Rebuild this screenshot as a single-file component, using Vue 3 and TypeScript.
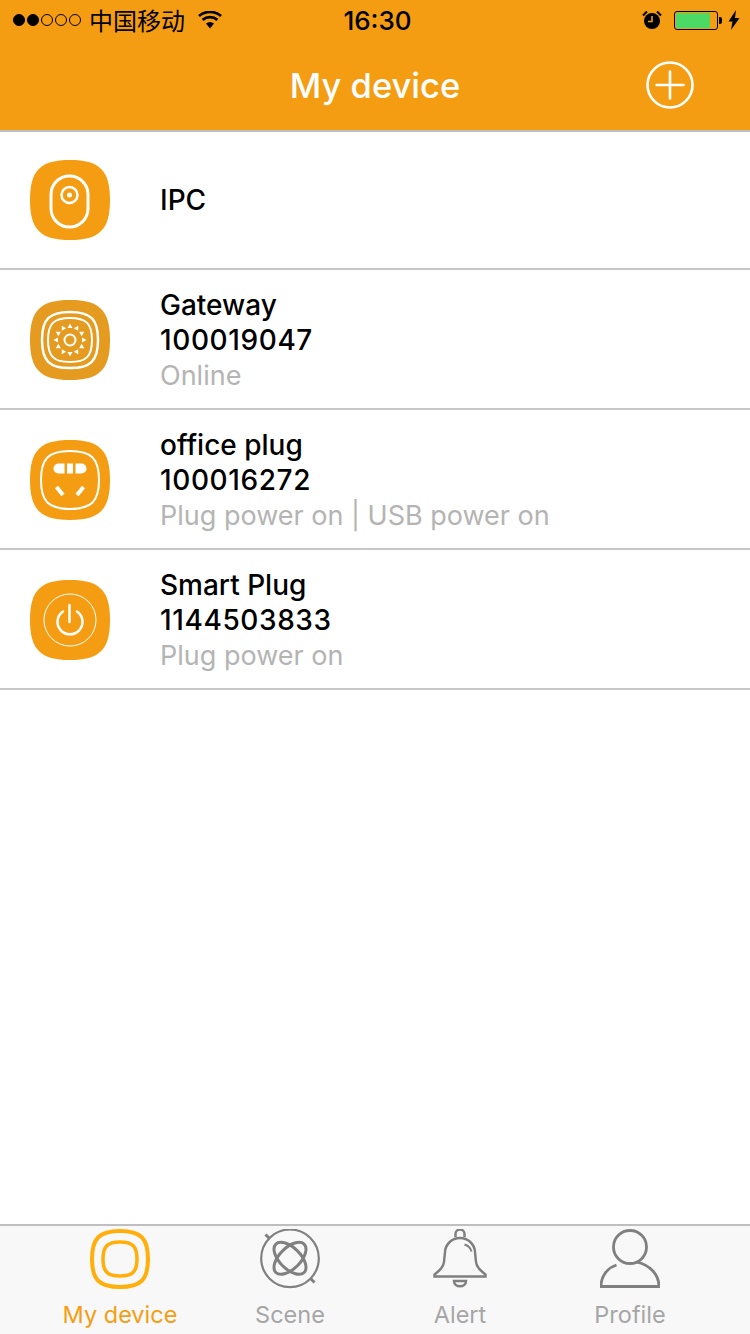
<script setup lang="ts">
interface Device {
  id: string
  icon: 'ipc' | 'gateway' | 'plug' | 'power'
  name: string
  serial?: string
  status?: string
}

const devices: Device[] = [
  { id: 'ipc', icon: 'ipc', name: 'IPC' },
  { id: 'gateway', icon: 'gateway', name: 'Gateway', serial: '100019047', status: 'Online' },
  { id: 'office', icon: 'plug', name: 'office plug', serial: '100016272', status: 'Plug power on | USB power on' },
  { id: 'smart', icon: 'power', name: 'Smart Plug', serial: '1144503833', status: 'Plug power on' },
]

const tabs = [
  { id: 'device', label: 'My device' },
  { id: 'scene', label: 'Scene' },
  { id: 'alert', label: 'Alert' },
  { id: 'profile', label: 'Profile' },
]

const signal = [true, true, false, false, false]
const sunRays = Array.from({ length: 12 }, (_, i) => i * 30)

// squircle outline centred on c, half width r
function squircle(c: number, r: number): string {
  const a = r * 0.74
  return `M${c} ${c - r}C${c + a} ${c - r} ${c + r} ${c - a} ${c + r} ${c}` +
    `C${c + r} ${c + a} ${c + a} ${c + r} ${c} ${c + r}` +
    `C${c - a} ${c + r} ${c - r} ${c + a} ${c - r} ${c}` +
    `C${c - r} ${c - a} ${c - a} ${c - r} ${c} ${c - r}Z`
}
</script>

<template>
  <div class="page">
    <header class="top">
      <div class="status-bar">
        <div class="status-left">
          <span class="dots">
            <i
              v-for="(on, i) in signal"
              :key="i"
              class="dot"
              :class="{ on }"
            />
          </span>
          <span class="carrier">中国移动</span>
          <svg
            class="wifi"
            width="24"
            height="18"
            viewBox="0 0 24 18"
          >
            <path
              d="M12 17.500 8 12.600a6.200 6.200 0 0 1 8 0Z"
              fill="#000"
            />
            <path
              d="M4.600 8.900a11.400 11.400 0 0 1 14.800 0M1 5a17 17 0 0 1 22 0"
              fill="none"
              stroke="#000"
              stroke-width="2.800"
            />
          </svg>
        </div>
        <span class="time">16:30</span>
        <div class="status-right">
          <svg
            width="20"
            height="20"
            viewBox="0 0 20 20"
          >
            <circle
              cx="10"
              cy="11"
              r="8"
              fill="#000"
            />
            <path
              d="M10 6v5.500H6"
              fill="none"
              stroke="#f59d12"
              stroke-width="1.600"
            />
            <path
              d="M1 5.500 5 1.500M19 5.500l-4-4"
              stroke="#000"
              stroke-width="2"
            />
          </svg>
          <span class="battery"><i class="battery-fill" /></span>
          <i class="battery-tip" />
          <svg
            class="bolt"
            width="12"
            height="20"
            viewBox="0 0 12 20"
          >
            <path
              d="M8 0 .5 11.500h4L3 20l8.500-12h-4.500z"
              fill="#000"
            />
          </svg>
        </div>
      </div>
      <div class="nav-bar">
        <span />
        <h1 class="title">My device</h1>
        <svg
          class="add"
          width="48"
          height="48"
          viewBox="0 0 48 48"
        >
          <circle
            cx="24"
            cy="24"
            r="22.500"
            fill="none"
            stroke="#fff"
            stroke-width="2.600"
          />
          <path
            d="M10.500 24h27M24 10.500v27"
            stroke="#fff"
            stroke-width="2.600"
            stroke-linecap="round"
          />
        </svg>
      </div>
    </header>

    <main class="list">
      <div
        v-for="device in devices"
        :key="device.id"
        class="row"
      >
        <svg
          class="row-icon"
          width="80"
          height="80"
          viewBox="0 0 80 80"
        >
          <path
            :d="squircle(40, 40)"
            :fill="device.icon === 'gateway' ? '#e59a20' : '#f59d12'"
          />
          <g
            v-if="device.icon === 'ipc'"
            fill="none"
            stroke="#fff"
          >
            <rect
              x="21"
              y="16"
              width="37"
              height="51"
              rx="18.500"
              stroke-width="3"
            />
            <circle
              cx="39.500"
              cy="35"
              r="8"
              stroke-width="2.500"
            />
            <circle
              cx="39.500"
              cy="35"
              r="2.500"
              fill="#fff"
              stroke="none"
            />
          </g>
          <g
            v-else-if="device.icon === 'gateway'"
            fill="none"
            stroke="#fff"
          >
            <path
              :d="squircle(40, 28)"
              stroke-width="2.500"
            />
            <path
              :d="squircle(40, 22)"
              stroke-width="2"
            />
            <circle
              cx="40"
              cy="40"
              r="5.500"
              stroke-width="2"
            />
            <path
              v-for="deg in sunRays"
              :key="deg"
              d="M40 23.500l2.500 4.500h-5z"
              fill="#fff"
              stroke="none"
              :transform="`rotate(${deg} 40 40)`"
            />
          </g>
          <g
            v-else-if="device.icon === 'plug'"
            fill="none"
            stroke="#fff"
          >
            <path
              :d="squircle(40, 29)"
              stroke-width="2"
            />
            <g
              fill="#fff"
              stroke="none"
            >
              <path d="M34.500 23.500H28.500a5 5 0 0 0 0 10h6z" />
              <rect
                x="37"
                y="23.500"
                width="6"
                height="10"
              />
              <path d="M45.500 23.500h6a5 5 0 0 1 0 10h-6z" />
            </g>
            <path
              d="M26.500 47 33 55M53.500 47 47 55"
              stroke-width="4"
            />
          </g>
          <g
            v-else
            fill="none"
            stroke="#fff"
          >
            <circle
              cx="40"
              cy="40"
              r="26"
              stroke-width="1"
            />
            <path
              d="M33 31.500a12.500 12.500 0 1 0 14 0"
              stroke-width="2.500"
              stroke-linecap="round"
            />
            <path
              d="M39.500 25v17"
              stroke-width="2.500"
              stroke-linecap="round"
            />
          </g>
        </svg>
        <div class="info">
          <div class="line name">{{ device.name }}</div>
          <div
            v-if="device.serial"
            class="line name serial"
          >{{ device.serial }}</div>
          <div
            v-if="device.status"
            class="line status"
          >{{ device.status }}</div>
        </div>
      </div>
    </main>

    <nav class="tabbar">
      <div
        v-for="tab in tabs"
        :key="tab.id"
        class="tab"
        :class="{ active: tab.id === 'device' }"
      >
        <svg
          width="60"
          height="60"
          viewBox="0 0 60 60"
          fill="none"
          stroke="#808080"
        >
          <g
            v-if="tab.id === 'device'"
            stroke="#ffae0a"
          >
            <path
              :d="squircle(30, 28)"
              stroke-width="4"
            />
            <path
              :d="squircle(30, 17)"
              stroke-width="3.500"
            />
          </g>
          <g v-else-if="tab.id === 'scene'">
            <circle
              cx="30"
              cy="29.300"
              r="28.800"
              stroke-width="2.200"
            />
            <path
              d="M5.500 5.500l4 4M50.500 49.500l4 4"
              stroke-width="3"
            />
            <ellipse
              cx="30"
              cy="29.300"
              rx="20"
              ry="10.500"
              stroke-width="3"
              transform="rotate(45 30 29.300)"
            />
            <ellipse
              cx="30"
              cy="29.300"
              rx="20"
              ry="10.500"
              stroke-width="3"
              transform="rotate(-45 30 29.300)"
            />
          </g>
          <g
            v-else-if="tab.id === 'alert'"
            stroke-width="2.500"
          >
            <path d="M25.500 8V5a4.500 4.500 0 0 1 9 0v3" />
            <path d="M4.500 47.500V45.500c4.500-3.500 9-7 9.500-12.500l1-10c.500-8 7-14 15-14s14.500 6 15 14l1 10c.500 5.500 5 9 9.500 12.500v2Z" />
            <path d="M24 52h12c0 7-12 7-12 0Z" />
            <path
              d="M34.500 15.500c3.500 1 6 3.500 7 7"
              stroke-width="2"
            />
          </g>
          <g
            v-else
            stroke-width="2.800"
          >
            <circle
              cx="30"
              cy="18"
              r="16.500"
            />
            <path d="M16.500 36C7 39 1 47.500 1 57.500h58C59 45 49 35.500 36.500 33" />
          </g>
        </svg>
        <span class="tab-label">{{ tab.label }}</span>
      </div>
    </nav>
  </div>
</template>

<style scoped>
.page {
  width: 750px;
  height: 1334px;
  display: flex;
  flex-direction: column;
  background: #fff;
  font-family: Inter, "Liberation Sans", sans-serif;
  overflow: hidden;
}

/* top orange area */
.top {
  height: 132px;
  box-sizing: border-box;
  background: #f59d12;
  border-bottom: 2px solid #bdc2c6;
}

.status-bar {
  height: 40px;
  display: grid;
  grid-template-columns: 1fr auto 1fr;
  align-items: center;
  padding: 0 10px 0 13px;
  color: #000;
}

.status-left,
.status-right {
  display: flex;
  align-items: center;
}

.status-right {
  justify-content: flex-end;
}

.dots {
  display: flex;
  gap: 2px;
}

.dot {
  width: 12px;
  height: 12px;
  box-sizing: border-box;
  border: 1px solid #000;
  border-radius: 50%;
}

.dot.on {
  background: #000;
}

.carrier {
  margin-left: 8px;
  font-family: "Noto Sans CJK SC", sans-serif;
  font-size: 24px;
  line-height: 40px;
}

.wifi {
  margin-left: 13px;
}

.time {
  margin-left: 2px;
  font-size: 26px;
  font-weight: 500;
}

.battery {
  width: 44px;
  height: 19px;
  box-sizing: border-box;
  margin-left: 12px;
  padding: 1px;
  border: 1px solid #000;
  border-radius: 3px;
}

.battery-fill {
  display: block;
  width: 34px;
  height: 100%;
  background: #4cd964;
}

.battery-tip {
  width: 3px;
  height: 7px;
  margin-left: 1px;
  background: #000;
  border-radius: 0 2px 2px 0;
}

.bolt {
  margin-left: 6px;
}

.nav-bar {
  height: 90px;
  display: grid;
  grid-template-columns: 1fr auto 1fr;
  align-items: center;
  padding-right: 56px;
}

.title {
  margin: 0 0 0 56px;
  color: #fff;
  font-size: 34.500px;
  font-weight: 500;
}

.add {
  justify-self: end;
}

/* device list */
.list {
  flex: 1;
}

.row {
  height: 140px;
  box-sizing: border-box;
  display: flex;
  align-items: center;
  padding: 2px 0 0 30px;
  border-bottom: 2px solid #c8c8c8;
}

.row:first-child {
  height: 138px;
  padding-top: 0;
}

.row-icon {
  flex: none;
}

.info {
  margin-left: 50px;
}

.line {
  height: 35px;
  line-height: 35px;
  font-size: 28px;
}

.name {
  color: #000;
  font-weight: 500;
}

.serial {
  letter-spacing: 0.6px;
}

.status {
  color: #b4b4b4;
  font-size: 27px;
  font-weight: 400;
  line-height: 36px;
}

/* bottom tabs */
.tabbar {
  height: 110px;
  box-sizing: border-box;
  display: grid;
  grid-template-columns: repeat(4, 170px);
  padding: 3px 35px 0;
  background: #f8f8f8;
  border-top: 2px solid #bfbfbf;
}

.tab {
  display: flex;
  flex-direction: column;
  align-items: center;
}

.tab-label {
  margin-top: 11px;
  color: #a6a6a6;
  font-size: 23.500px;
  line-height: 30px;
}

.tab.active .tab-label {
  color: #f59d12;
}
</style>

<style>
body {
  background: #fff;
}
</style>
